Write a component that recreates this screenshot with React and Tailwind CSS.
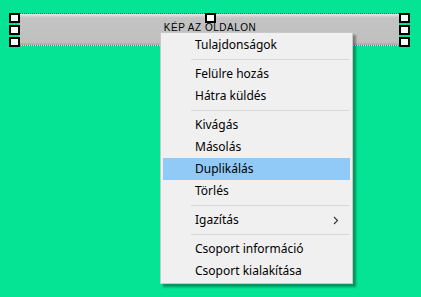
import React from 'react';

const Handle = () => <div className="w-[11px] h-[10px] bg-white border-2 border-black" />;

const Item = ({ label, active, arrow }) => (
  <div className={`h-[22px] flex items-center pl-[32px] pr-[10px] ${active ? 'bg-[#91c9f7]' : ''}`}>
    <span className="flex-1">{label}</span>
    {arrow && (
      <svg width="6" height="9" viewBox="0 0 6 9" className="mr-[1px]">
        <path d="M1 1 L4.5 4.5 L1 8" fill="none" stroke="#333" strokeWidth="1.1" />
      </svg>
    )}
  </div>
);

const Sep = () => (
  <div className="h-[7px] flex items-center pl-[28px] pr-[1px]">
    <div className="h-px w-full bg-[#d7d7d7]" />
  </div>
);

const App = () => {
  return (
    <div className="relative w-[421px] h-[297px] bg-[#05e394] overflow-hidden font-['Noto_Sans',sans-serif]">
      {/* selected element with its handles */}
      <div className="relative ml-[9px] mt-[13px] w-[401px] h-[33px]">
        <div className="ml-[10px] w-[380px] h-[33px] border-t border-dotted border-t-[#ff0060] border-b border-b-[#8a7a20] bg-[linear-gradient(#e6e6e6_0px,#c3c3c3_4px,#c0c0c0_28px,#a8a8a8_31px,#888_33px)] flex justify-center pt-[9px] pl-[2px]">
          <span className="text-[10px] leading-none tracking-[0.5px] text-black font-['Liberation_Sans',sans-serif]">KÉP AZ OLDALON</span>
        </div>
        <div className="absolute left-0 right-0 top-0 -bottom-[1px] flex justify-between pointer-events-none">
          <div className="flex flex-col justify-between">
            <Handle />
            <Handle />
            <Handle />
          </div>
          <div className="pl-[1px]">
            <Handle />
          </div>
          <div className="flex flex-col justify-between">
            <Handle />
            <Handle />
            <Handle />
          </div>
        </div>
      </div>

      {/* context menu */}
      <div className="absolute left-[160px] top-[32px] w-[193px] bg-[#f0f0f0] border border-[#c8c8c8] py-[1px] px-[2px] text-[12px] text-black shadow-[3px_3px_2px_rgba(0,0,0,0.35)]">
        <Item label="Tulajdonságok" />
        <Sep />
        <Item label="Felülre hozás" />
        <Item label="Hátra küldés" />
        <Sep />
        <Item label="Kivágás" />
        <Item label="Másolás" />
        <Item label="Duplikálás" active />
        <Item label="Törlés" />
        <Sep />
        <Item label="Igazítás" arrow />
        <Sep />
        <Item label="Csoport információ" />
        <Item label="Csoport kialakítása" />
      </div>
    </div>
  );
};

export default App;
